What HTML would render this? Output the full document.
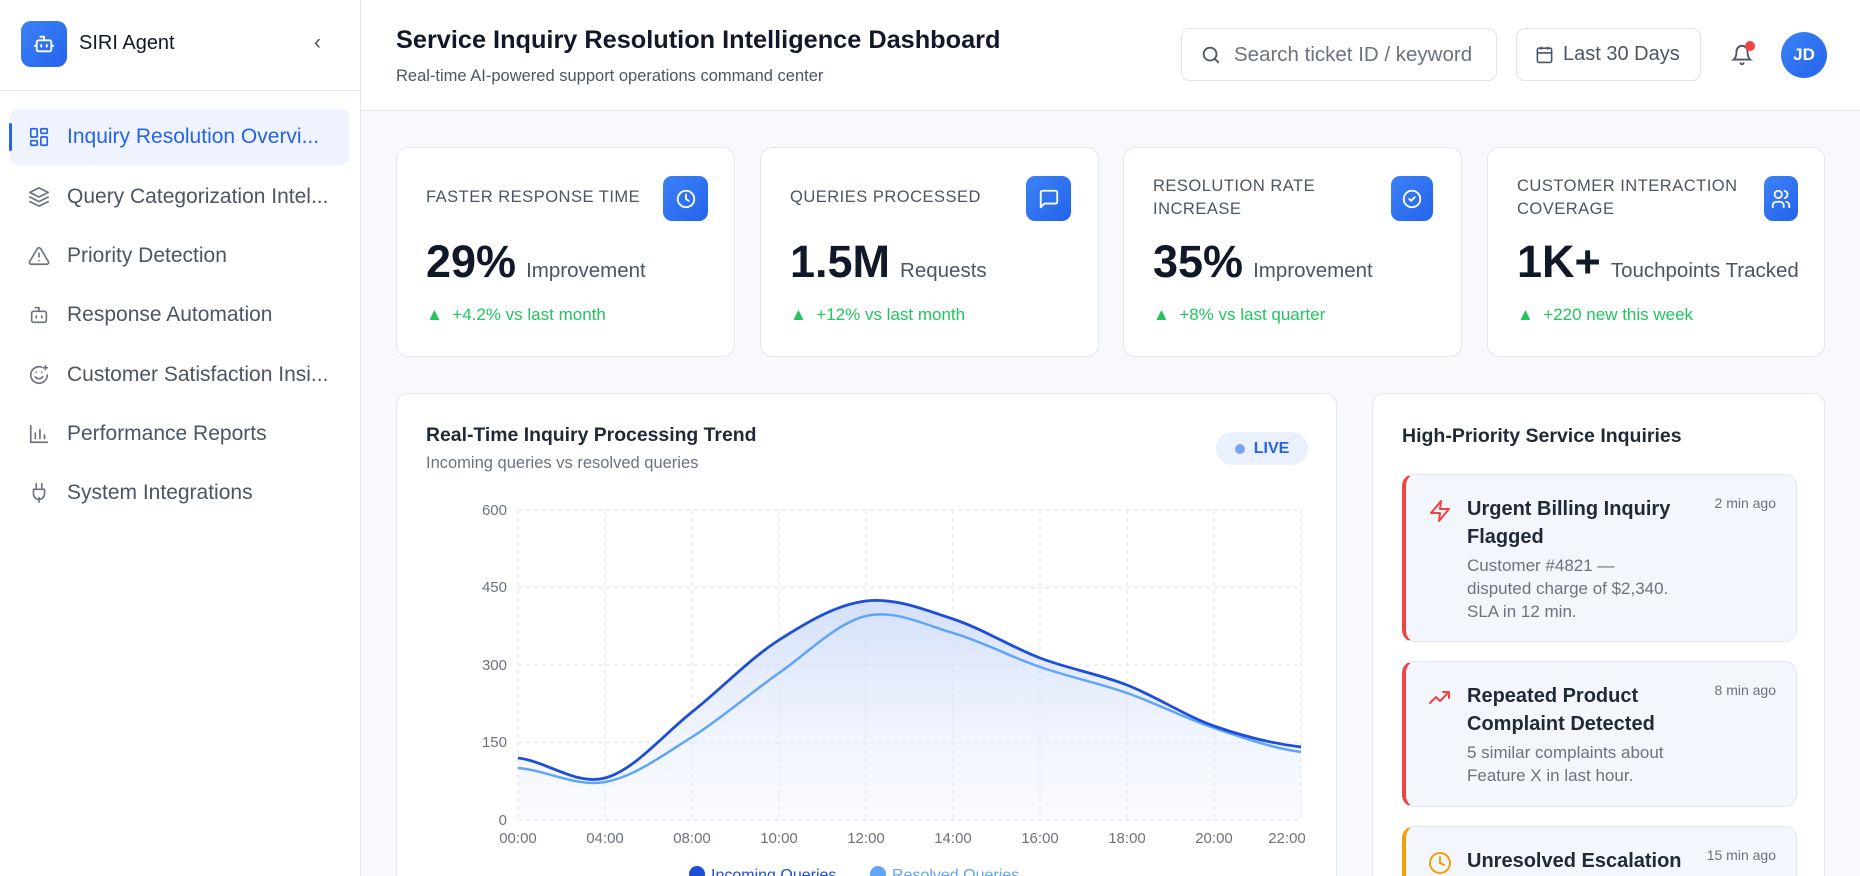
<!DOCTYPE html>
<html><head><meta charset="utf-8"><style>
*{box-sizing:border-box;margin:0;padding:0}
html{width:1860px;height:876px;overflow:hidden}
body{width:1860px;height:876px;overflow:hidden;background:#f8f9fc;font-family:"Liberation Sans",sans-serif;position:relative;color:#111827}
.a{position:absolute}
.side{left:0;top:0;width:361px;height:876px;background:#fff;border-right:1px solid #e5e7eb}
.nav{position:absolute;left:10px;width:339px;height:56px;display:flex;align-items:center;font-size:21px;color:#4b5563;border-radius:8px}
.nav svg{position:absolute;left:18px;width:22px;height:22px;fill:none;stroke:#6b7280;stroke-width:1.8;stroke-linecap:round;stroke-linejoin:round}
.nav span{position:absolute;left:57px;white-space:nowrap}
.card{background:#fff;border:1px solid #e3e7ef;border-radius:12px;position:absolute}
.lbl{position:absolute;left:29px;font-size:16.5px;color:#4b5563;letter-spacing:.5px;line-height:23px}
.ib{position:absolute;width:45px;height:45px;border-radius:9px;background:linear-gradient(135deg,#3b82f6,#2563eb);top:28px;display:flex;align-items:center;justify-content:center}
.ib svg{width:22px;height:22px;fill:none;stroke:#fff;stroke-width:2;stroke-linecap:round;stroke-linejoin:round}
.big{position:absolute;left:29px;top:88px;font-size:45px;font-weight:bold;color:#111827}
.big small{font-size:20.5px;font-weight:normal;color:#4b5563;margin-left:10px}
.tr{position:absolute;left:29px;top:157px;font-size:17px;color:#22c55e}
.al{position:absolute;left:1402px;width:395px;background:#f3f6fc;border:1px solid #e2e7f0;border-left:4px solid #ef4444;border-radius:12px}
.al .t{position:absolute;left:61px;top:20px;font-size:20px;font-weight:bold;color:#1f2937;line-height:28px;width:230px}
.al .d{position:absolute;left:61px;font-size:17px;color:#6b7280;line-height:23px;width:240px}
.al .m{position:absolute;right:20px;top:20px;font-size:14px;color:#6b7280}
.al svg{position:absolute;left:22px;top:24px;width:24px;height:24px;fill:none;stroke-width:2;stroke-linecap:round;stroke-linejoin:round}
</style></head><body>
<div class="a side">
 <div class="a" style="left:21px;top:21px;width:46px;height:46px;border-radius:10px;background:linear-gradient(135deg,#3b82f6,#2563eb);display:flex;align-items:center;justify-content:center">
  <svg width="22" height="22" viewBox="0 0 24 24" fill="none" stroke="#fff" stroke-width="2" stroke-linecap="round"><rect x="4" y="8" width="16" height="12" rx="2"/><path d="M12 8V4H8M9 13v2M15 13v2M2 14h2M20 14h2"/></svg>
 </div>
 <div class="a" style="left:79px;top:32px;font-size:20px;color:#111827">SIRI Agent</div>
 <div class="a" style="left:314px;top:31px;font-size:21px;color:#4b5563">&#8249;</div>
 <div class="a" style="left:0;top:90px;width:360px;height:1px;background:#e5e7eb"></div>
 <div class="nav" style="top:109px;background:#eff3fd;color:#2563eb"><div class="a" style="left:-1px;top:14px;width:3px;height:28px;background:#2563eb;border-radius:2px"></div><svg viewBox="0 0 24 24" style="stroke:#2563eb"><rect x="3" y="3" width="7" height="9" rx="1"/><rect x="14" y="3" width="7" height="5" rx="1"/><rect x="14" y="12" width="7" height="9" rx="1"/><rect x="3" y="16" width="7" height="5" rx="1"/></svg><span>Inquiry Resolution Overvi...</span></div>
 <div class="nav" style="top:169px"><svg viewBox="0 0 24 24"><path d="M12 2 2 7l10 5 10-5-10-5zM2 12l10 5 10-5M2 17l10 5 10-5"/></svg><span>Query Categorization Intel...</span></div>
 <div class="nav" style="top:228px"><svg viewBox="0 0 24 24"><path d="M10.3 3.9 1.8 18a2 2 0 0 0 1.7 3h17a2 2 0 0 0 1.7-3L13.7 3.9a2 2 0 0 0-3.4 0zM12 9v4M12 17h.01"/></svg><span>Priority Detection</span></div>
 <div class="nav" style="top:287px"><svg viewBox="0 0 24 24"><rect x="4" y="8" width="16" height="12" rx="2"/><path d="M12 8V4H8M9 13v2M15 13v2"/></svg><span>Response Automation</span></div>
 <div class="nav" style="top:347px"><svg viewBox="0 0 24 24"><path d="M21 12a9 9 0 1 1-6-8.5M8 14s1.5 2 4 2 4-2 4-2M9 9h.01M15 9h.01M19 2v4M17 4h4"/></svg><span>Customer Satisfaction Insi...</span></div>
 <div class="nav" style="top:406px"><svg viewBox="0 0 24 24"><path d="M3 3v18h18M8 17V11M13 17V7M18 17v-4"/></svg><span>Performance Reports</span></div>
 <div class="nav" style="top:465px"><svg viewBox="0 0 24 24"><path d="M12 22v-5M9 8V2M15 8V2M18 8v5a6 6 0 0 1-12 0V8z"/></svg><span>System Integrations</span></div>
</div>

<div class="a" style="left:361px;top:0;width:1499px;height:111px;background:#fff;border-bottom:1px solid #e5e7eb"></div>
<div class="a" style="left:396px;top:26px;font-size:25.3px;font-weight:bold;color:#111827">Service Inquiry Resolution Intelligence Dashboard</div>
<div class="a" style="left:396px;top:67px;font-size:16.5px;color:#4b5563">Real-time AI-powered support operations command center</div>
<div class="a" style="left:1181px;top:28px;width:316px;height:53px;border:1px solid #dfe3ea;border-radius:9px;background:#fff;overflow:hidden">
 <svg class="a" style="left:18px;top:15px" width="22" height="22" viewBox="0 0 24 24" fill="none" stroke="#4b5563" stroke-width="2" stroke-linecap="round"><circle cx="11" cy="11" r="7"/><path d="m20 20-4-4"/></svg>
 <div class="a" style="left:52px;top:14px;font-size:20.5px;color:#6b7280;white-space:nowrap;width:243px;overflow:hidden">Search ticket ID / keyword</div>
</div>
<div class="a" style="left:1516px;top:28px;width:185px;height:53px;border:1px solid #dfe3ea;border-radius:9px;background:#fff">
 <svg class="a" style="left:18px;top:16px" width="19" height="19" viewBox="0 0 24 24" fill="none" stroke="#4b5563" stroke-width="2"><rect x="3" y="4" width="18" height="18" rx="2"/><path d="M16 2v4M8 2v4M3 10h18"/></svg>
 <div class="a" style="left:46px;top:14px;font-size:20px;color:#4b5563">Last 30 Days</div>
</div>
<svg class="a" style="left:1731px;top:43px" width="22" height="24" viewBox="0 0 24 24" fill="none" stroke="#4b5563" stroke-width="2" stroke-linecap="round"><path d="M6 8a6 6 0 0 1 12 0c0 7 3 9 3 9H3s3-2 3-9M10.3 21a1.9 1.9 0 0 0 3.4 0"/></svg>
<div class="a" style="left:1745px;top:41px;width:10px;height:10px;border-radius:50%;background:#ef4444"></div>
<div class="a" style="left:1781px;top:32px;width:46px;height:46px;border-radius:50%;background:linear-gradient(135deg,#3b82f6,#2563eb);color:#fff;font-size:17px;font-weight:bold;display:flex;align-items:center;justify-content:center">JD</div>

<div class="card" style="left:396px;top:147px;width:339px;height:210px">
 <div class="lbl" style="top:38px">FASTER RESPONSE TIME</div>
 <div class="ib" style="left:266px"><svg viewBox="0 0 24 24"><circle cx="12" cy="12" r="9"/><path d="M12 7v5l3 2"/></svg></div>
 <div class="big">29%<small>Improvement</small></div><div class="tr">▲ &nbsp;+4.2% vs last month</div>
</div>
<div class="card" style="left:760px;top:147px;width:339px;height:210px">
 <div class="lbl" style="top:38px">QUERIES PROCESSED</div>
 <div class="ib" style="left:265px"><svg viewBox="0 0 24 24"><path d="M21 15a2 2 0 0 1-2 2H7l-4 4V5a2 2 0 0 1 2-2h14a2 2 0 0 1 2 2z"/></svg></div>
 <div class="big">1.5M<small>Requests</small></div><div class="tr">▲ &nbsp;+12% vs last month</div>
</div>
<div class="card" style="left:1123px;top:147px;width:339px;height:210px">
 <div class="lbl" style="top:27px">RESOLUTION RATE<br>INCREASE</div>
 <div class="ib" style="left:267px;width:42px"><svg viewBox="0 0 24 24"><circle cx="12" cy="12" r="9"/><path d="m9 12 2 2 4-4"/></svg></div>
 <div class="big">35%<small>Improvement</small></div><div class="tr">▲ &nbsp;+8% vs last quarter</div>
</div>
<div class="card" style="left:1487px;top:147px;width:338px;height:210px">
 <div class="lbl" style="top:27px">CUSTOMER INTERACTION<br>COVERAGE</div>
 <div class="ib" style="left:276px;width:34px"><svg viewBox="0 0 24 24"><circle cx="9" cy="7" r="4"/><path d="M3 21v-2a4 4 0 0 1 4-4h4a4 4 0 0 1 4 4v2M16 3.1a4 4 0 0 1 0 7.8M21 21v-2a4 4 0 0 0-3-3.9"/></svg></div>
 <div class="big">1K+<small>Touchpoints Tracked</small></div><div class="tr">▲ &nbsp;+220 new this week</div>
</div>

<div class="card" style="left:396px;top:393px;width:941px;height:500px"></div>
<div class="a" style="left:426px;top:424px;font-size:19.4px;font-weight:bold;color:#1f2937">Real-Time Inquiry Processing Trend</div>
<div class="a" style="left:426px;top:454px;font-size:16.5px;color:#6b7280">Incoming queries vs resolved queries</div>
<div class="a" style="left:1216px;top:432px;width:92px;height:33px;border-radius:17px;background:#eaf0fd;color:#2563eb;font-size:16px;font-weight:bold;display:flex;align-items:center;justify-content:center"><span style="display:inline-block;width:10px;height:10px;border-radius:50%;background:#7ba4f0;margin-right:9px"></span>LIVE</div>
<svg class="a" style="left:0;top:0" width="1860" height="876" font-family="Liberation Sans, sans-serif">
 <defs><linearGradient id="g" x1="0" y1="0" x2="0" y2="1"><stop offset="0" stop-color="#c9d8f8" stop-opacity=".8"/><stop offset="1" stop-color="#eef2fd" stop-opacity=".3"/></linearGradient></defs>
 <g stroke="#e2e6ef" stroke-dasharray="4 4" stroke-width="1.2">
  <path d="M518 510H1301M518 587.5H1301M518 665H1301M518 742.5H1301M518 820H1301"/>
  <path d="M518 510V820M605 510V820M692 510V820M779 510V820M866 510V820M953 510V820M1040 510V820M1127 510V820M1214 510V820M1301 510V820"/>
 </g>
 <path fill="url(#g)" d="M518,758 C547,761.3 576,785.7 605,778 C634,770.3 663,735 692,712 C721,689 750,658.5 779,640 C808,621.5 837,604.5 866,601 C895,597.5 924,609.5 953,619 C982,628.5 1011,647 1040,658 C1069,669 1098,673.7 1127,685 C1156,696.3 1185,715.7 1214,726 C1243,736.3 1272,743.5 1301,747 L1301,820 L518,820Z"/>
 <path fill="none" stroke="#60a5fa" stroke-width="2.5" d="M518,768 C547,770.3 576,787.2 605,782 C634,776.8 663,755.2 692,737 C721,718.8 750,693.2 779,673 C808,652.8 837,622.7 866,616 C895,609.3 924,624.5 953,633 C982,641.5 1011,657 1040,667 C1069,677 1098,682.8 1127,693 C1156,703.2 1185,718.2 1214,728 C1243,737.8 1272,748 1301,752"/>
 <path fill="none" stroke="#1d4ed8" stroke-width="2.8" d="M518,758 C547,761.3 576,785.7 605,778 C634,770.3 663,735 692,712 C721,689 750,658.5 779,640 C808,621.5 837,604.5 866,601 C895,597.5 924,609.5 953,619 C982,628.5 1011,647 1040,658 C1069,669 1098,673.7 1127,685 C1156,696.3 1185,715.7 1214,726 C1243,736.3 1272,743.5 1301,747"/>
 <g fill="#6b7280" font-size="15" text-anchor="end"><text x="507" y="515">600</text><text x="507" y="592">450</text><text x="507" y="670">300</text><text x="507" y="747">150</text><text x="507" y="825">0</text></g>
 <g fill="#6b7280" font-size="15" text-anchor="middle"><text x="518" y="843">00:00</text><text x="605" y="843">04:00</text><text x="692" y="843">08:00</text><text x="779" y="843">10:00</text><text x="866" y="843">12:00</text><text x="953" y="843">14:00</text><text x="1040" y="843">16:00</text><text x="1127" y="843">18:00</text><text x="1214" y="843">20:00</text><text x="1287" y="843">22:00</text></g>
 <circle cx="697" cy="874" r="8" fill="#1d4ed8"/><text x="711" y="880" font-size="16" fill="#1d4ed8">Incoming Queries</text>
 <circle cx="878" cy="874" r="8" fill="#60a5fa"/><text x="892" y="880" font-size="16" fill="#60a5fa">Resolved Queries</text>
</svg>

<div class="card" style="left:1372px;top:393px;width:453px;height:500px"></div>
<div class="a" style="left:1402px;top:425px;font-size:19.5px;font-weight:bold;color:#1f2937">High-Priority Service Inquiries</div>
<div class="al" style="top:474px;height:168px">
 <svg viewBox="0 0 24 24" stroke="#ef4444"><path d="M13 2 3 14h9l-1 8 10-12h-9l1-8z"/></svg>
 <div class="t">Urgent Billing Inquiry Flagged</div><div class="m">2 min ago</div>
 <div class="d" style="top:79px">Customer #4821 —<br>disputed charge of $2,340.<br>SLA in 12 min.</div>
</div>
<div class="al" style="top:661px;height:146px">
 <svg viewBox="0 0 24 24" stroke="#ef4444"><path d="m2 17 6-6 4 4 9-9M15 6h6v6"/></svg>
 <div class="t">Repeated Product Complaint Detected</div><div class="m">8 min ago</div>
 <div class="d" style="top:79px">5 similar complaints about<br>Feature X in last hour.</div>
</div>
<div class="al" style="top:826px;height:80px;border-left-color:#f59e0b">
 <svg viewBox="0 0 24 24" stroke="#f59e0b"><circle cx="12" cy="12" r="10"/><path d="M12 6v6l4 2"/></svg>
 <div class="t" style="width:260px">Unresolved Escalation</div><div class="m">15 min ago</div>
</div>
</body></html>
